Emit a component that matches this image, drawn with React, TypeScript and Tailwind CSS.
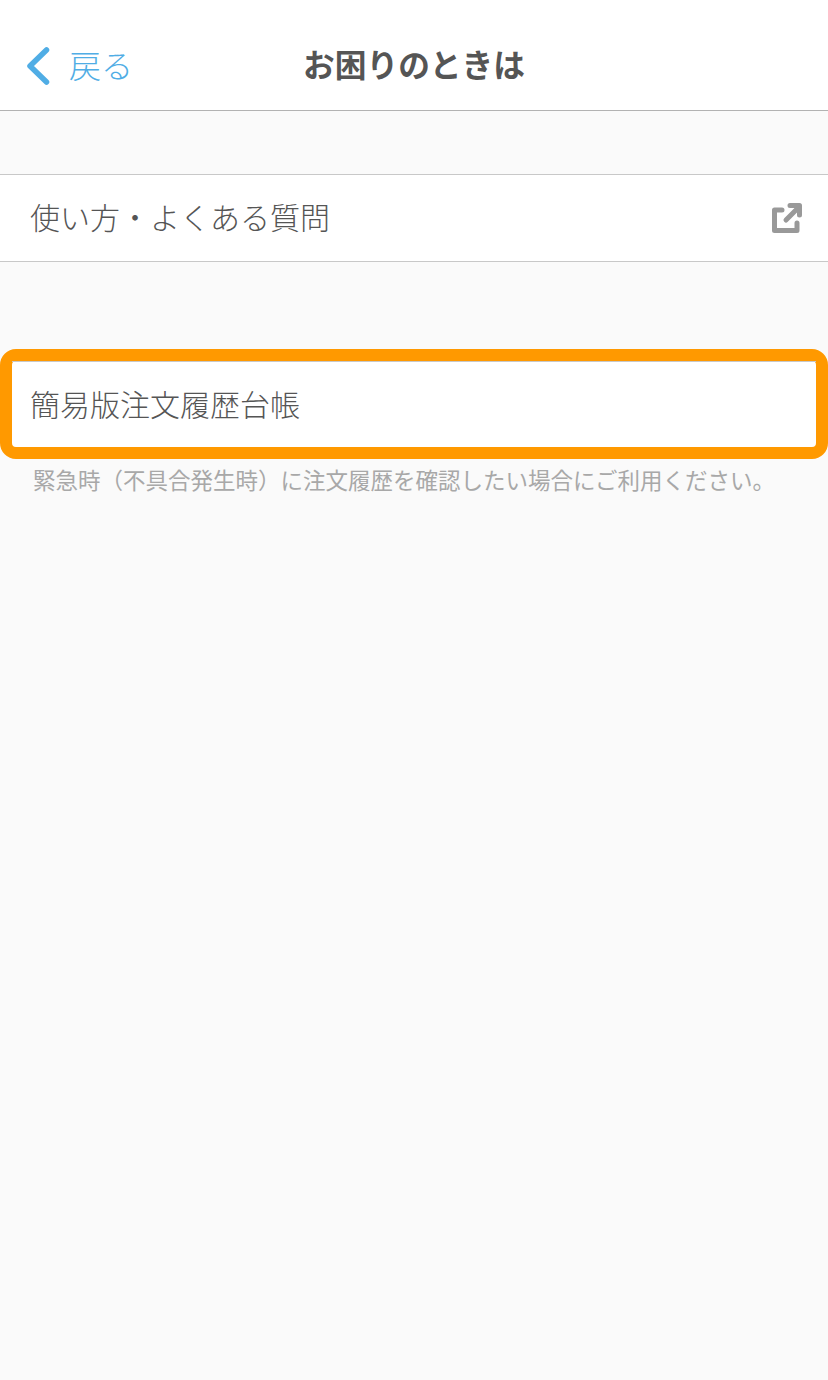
const font = "font-['Noto_Sans_CJK_JP','Noto_Sans',sans-serif]"

export default function App() {
  return (
    <div className={`${font} min-h-[1380px] w-full bg-[#fafafa]`}>
      {/* Nav bar */}
      <header className="relative flex h-[111px] items-center border-b border-[#b2b2b2] bg-white pt-[21px]">
        <div className="flex items-center pl-[26px]">
          <svg width="26" height="40" viewBox="0 0 26 40" fill="none">
            <path d="M20.5 4 L4 20 L20.5 36" stroke="#50ade5" strokeWidth="5.5" strokeLinecap="round" strokeLinejoin="round" />
          </svg>
          <span className="mb-[3px] ml-[17px] text-[32px] leading-none font-light text-[#50ade5]">戻る</span>
        </div>
        <h1 className="absolute inset-x-0 mb-[3px] text-center text-[31.7px] leading-none font-bold text-[#555555]">お困りのときは</h1>
      </header>

      {/* Help link */}
      <div className="mt-[63px] flex h-[88px] items-center justify-between border-y border-[#c8c8c8] bg-white pr-[26px] pl-[30px]">
        <span className="mb-[4px] text-[30px] leading-none font-light text-[#555555]">使い方・よくある質問</span>
        <svg width="30" height="30" viewBox="0 0 30 30" fill="none" stroke="#999999" strokeWidth="5" strokeLinecap="round" strokeLinejoin="round">
          <path d="M10 7 H2.5 V27.5 H25 V20" />
          <path d="M14 17 L26 5" />
          <path d="M18 2.5 H27.5 V12" />
        </svg>
      </div>

      {/* Highlighted row */}
      <div className="mt-[87px] rounded-[16px] border-[12px] border-[#ff9900] bg-white">
        <div className="flex h-[86px] items-center border-t border-[#c8c8c8] pl-[18px]">
          <span className="mb-[4px] text-[30px] leading-none font-light text-[#555555]">簡易版注文履歴台帳</span>
        </div>
      </div>

      <p className="mt-[6px] pl-[33px] text-[22.5px] leading-[28px] font-normal whitespace-nowrap text-[#a8a8a8]">
        緊急時（不具合発生時）に注文履歴を確認したい場合にご利用ください。
      </p>
    </div>
  )
}
